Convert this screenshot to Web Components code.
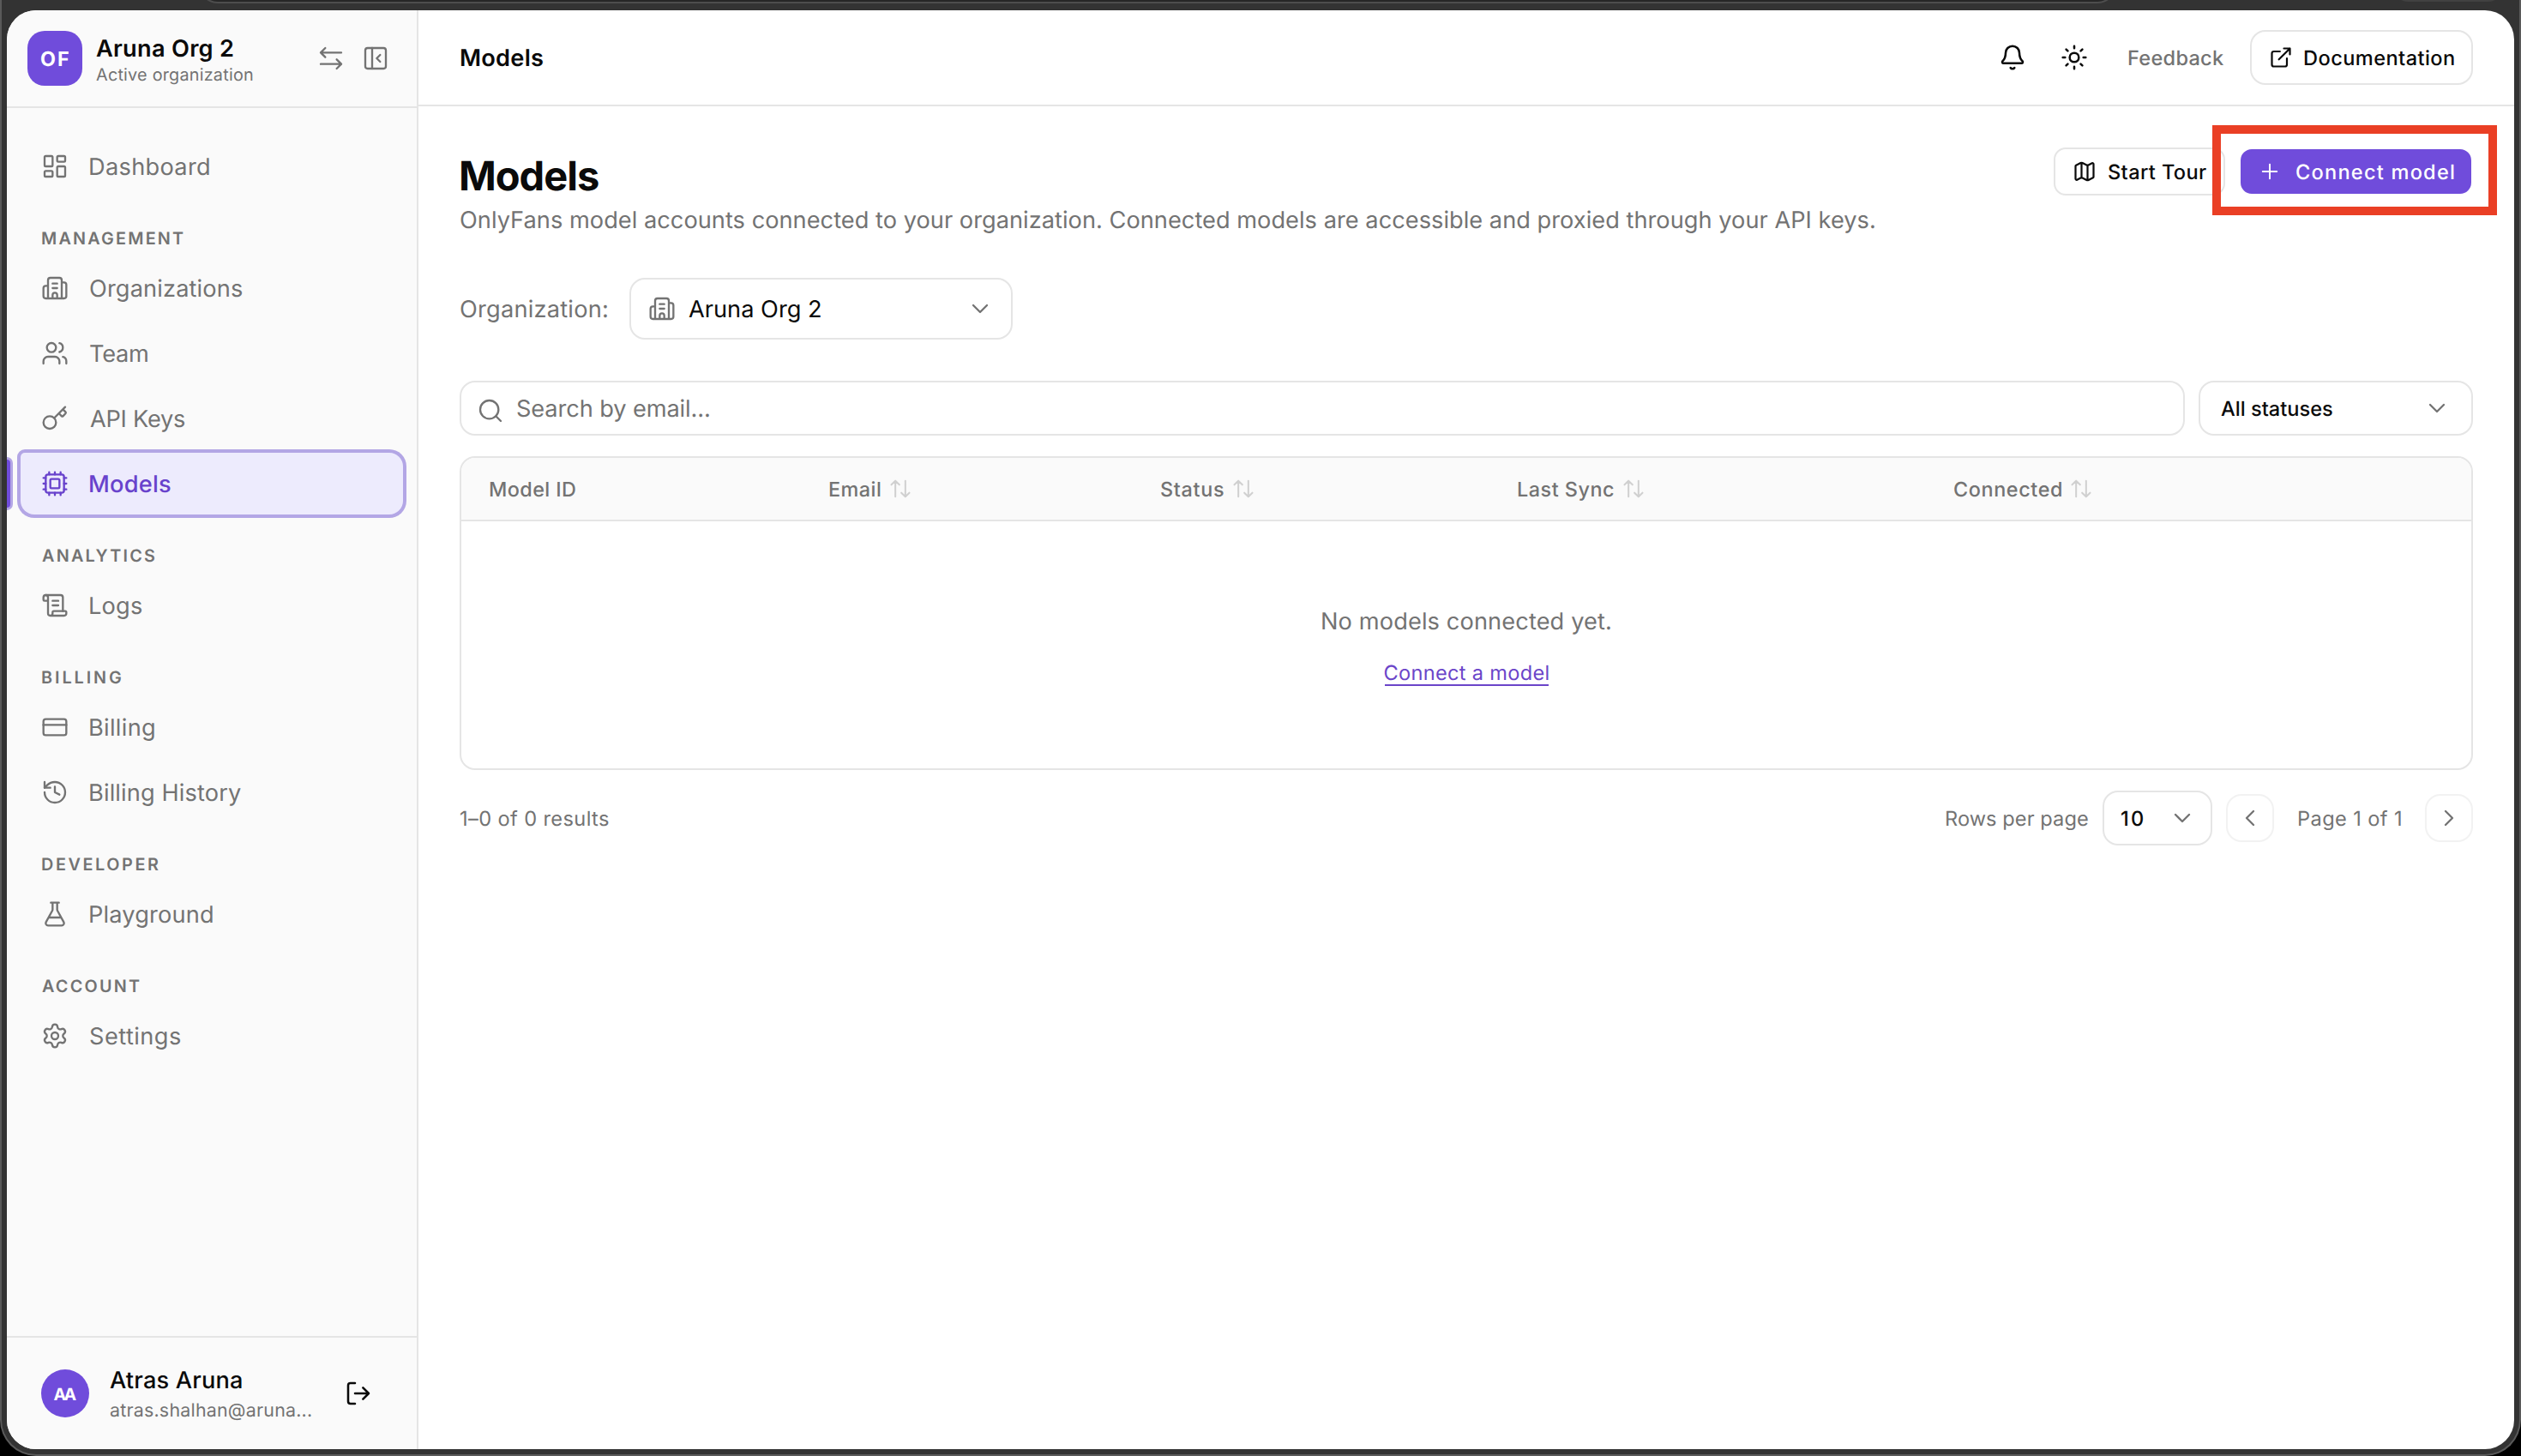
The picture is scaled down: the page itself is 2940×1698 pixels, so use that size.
<!DOCTYPE html>
<html lang="en">
<head>
<meta charset="utf-8">
<title>Models</title>
<style>
  body {
    margin: 0;
    width: 2940px;
    height: 1698px;
    overflow: hidden;
    background: #000;
    color: #0a0a0a;
    font-family: Inter, "Liberation Sans", sans-serif;
    --primary: #704cdb;
    --muted: #737373;
    --line: #e5e5e5;
  }
</style>
</head>
<body>
<app-window>
  <side-bar slot="side">
    <org-header slot="top"></org-header>
    <nav-item icon="dashboard" width="139">Dashboard</nav-item>
    <nav-group label="MANAGEMENT" width="165">
      <nav-item icon="building" width="177">Organizations</nav-item>
      <nav-item icon="users" width="67">Team</nav-item>
      <nav-item icon="key" width="110">API Keys</nav-item>
      <nav-item icon="cpu" width="94" active>Models</nav-item>
    </nav-group>
    <nav-group label="ANALYTICS" width="131">
      <nav-item icon="scroll" width="60">Logs</nav-item>
    </nav-group>
    <nav-group label="BILLING" width="92">
      <nav-item icon="card" width="75">Billing</nav-item>
      <nav-item icon="history" width="176">Billing History</nav-item>
    </nav-group>
    <nav-group label="DEVELOPER" width="136">
      <nav-item icon="flask" width="143">Playground</nav-item>
    </nav-group>
    <nav-group label="ACCOUNT" width="114">
      <nav-item icon="settings" width="105">Settings</nav-item>
    </nav-group>
    <user-card slot="bottom"></user-card>
  </side-bar>
  <top-bar></top-bar>
  <models-page></models-page>
</app-window>

<script>
const icons = {
  dashboard: '<rect width="7" height="9" x="3" y="3" rx="1"/><rect width="7" height="5" x="14" y="3" rx="1"/><rect width="7" height="9" x="14" y="12" rx="1"/><rect width="7" height="5" x="3" y="16" rx="1"/>',
  building: '<path d="M10 12h4M10 8h4M14 21v-3a2 2 0 0 0-4 0v3M6 10H4a2 2 0 0 0-2 2v7a2 2 0 0 0 2 2h16a2 2 0 0 0 2-2V9a2 2 0 0 0-2-2h-2M6 21V5a2 2 0 0 1 2-2h8a2 2 0 0 1 2 2v16"/>',
  users: '<path d="M16 21v-2a4 4 0 0 0-4-4H6a4 4 0 0 0-4 4v2M16 3.128a4 4 0 0 1 0 7.744M22 21v-2a4 4 0 0 0-3-3.87"/><circle cx="9" cy="7" r="4"/>',
  key: '<path d="m15.5 7.5 2.3 2.3a1 1 0 0 0 1.4 0l2.1-2.1a1 1 0 0 0 0-1.4L19 4M21 2l-9.6 9.6"/><circle cx="7.5" cy="15.5" r="5.5"/>',
  cpu: '<path d="M12 20v2M12 2v2M17 20v2M17 2v2M2 12h2M2 17h2M2 7h2M20 12h2M20 17h2M20 7h2M7 20v2M7 2v2"/><rect x="4" y="4" width="16" height="16" rx="2"/><rect x="8" y="8" width="8" height="8" rx="1"/>',
  scroll: '<path d="M15 12h-5M15 8h-5M19 17V5a2 2 0 0 0-2-2H4"/><path d="M8 21h12a2 2 0 0 0 2-2v-1a1 1 0 0 0-1-1H11a1 1 0 0 0-1 1v1a2 2 0 1 1-4 0V5a2 2 0 1 0-4 0v2a1 1 0 0 0 1 1h3"/>',
  card: '<rect width="20" height="14" x="2" y="5" rx="2"/><path d="M2 10h20"/>',
  history: '<path d="M3 12a9 9 0 1 0 9-9 9.75 9.75 0 0 0-6.74 2.74L3 8"/><path d="M3 3v5h5M12 7v5l4 2"/>',
  flask: '<path d="M14 2v6a2 2 0 0 0 .245.96l5.51 10.08A2 2 0 0 1 18 22H6a2 2 0 0 1-1.755-2.96l5.51-10.08A2 2 0 0 0 10 8V2M6.453 15h11.094M8.5 2h7"/>',
  settings: '<path d="M9.671 4.136a2.34 2.34 0 0 1 4.659 0 2.34 2.34 0 0 0 3.319 1.915 2.34 2.34 0 0 1 2.33 4.033 2.34 2.34 0 0 0 0 3.831 2.34 2.34 0 0 1-2.33 4.033 2.34 2.34 0 0 0-3.319 1.915 2.34 2.34 0 0 1-4.659 0 2.34 2.34 0 0 0-3.32-1.915 2.34 2.34 0 0 1-2.33-4.033 2.34 2.34 0 0 0 0-3.831A2.34 2.34 0 0 1 6.35 6.051a2.34 2.34 0 0 0 3.319-1.915"/><circle cx="12" cy="12" r="3"/>',
  swap: '<path d="M21 7H3M7 3 3 7l4 4M3 17h18M17 13l4 4-4 4"/>',
  panel: '<rect width="18" height="18" x="3" y="3" rx="2"/><path d="M9 3v18M16 15l-3-3 3-3"/>',
  logout: '<path d="M9 21H5a2 2 0 0 1-2-2V5a2 2 0 0 1 2-2h4M16 17l5-5-5-5M21 12H9"/>',
  bell: '<path d="M10.268 21a2 2 0 0 0 3.464 0M3.262 15.326A1 1 0 0 0 4 17h16a1 1 0 0 0 .74-1.673C19.41 13.956 18 12.499 18 8A6 6 0 0 0 6 8c0 4.499-1.411 5.956-2.738 7.326"/>',
  sun: '<circle cx="12" cy="12" r="4"/><path d="M12 2v2M12 20v2M4.93 4.93l1.41 1.41M17.66 17.66l1.41 1.41M2 12h2M20 12h2M6.34 17.66l-1.41 1.41M19.07 4.93l-1.41 1.41"/>',
  external: '<path d="M15 3h6v6M10 14 21 3M18 13v6a2 2 0 0 1-2 2H5a2 2 0 0 1-2-2V8a2 2 0 0 1 2-2h6"/>',
  map: '<path d="M14.106 5.553a2 2 0 0 0 1.788 0l3.659-1.83A1 1 0 0 1 21 4.619v12.764a1 1 0 0 1-.553.894l-4.553 2.277a2 2 0 0 1-1.788 0l-4.212-2.106a2 2 0 0 0-1.788 0l-3.659 1.83A1 1 0 0 1 3 19.381V6.618a1 1 0 0 1 .553-.894l4.553-2.277a2 2 0 0 1 1.788 0zM15 5.764v15M9 3.236v15"/>',
  plus: '<path d="M5 12h14M12 5v14"/>',
  search: '<circle cx="11" cy="11" r="8"/><path d="m21 21-4.3-4.3"/>',
  down: '<path d="m6 9 6 6 6-6"/>',
  left: '<path d="m15 18-6-6 6-6"/>',
  right: '<path d="m9 18 6-6-6-6"/>',
  sort: '<path d="m21 16-4 4-4-4M17 20V4M3 8l4-4 4 4M7 4v16"/>'
}

// Registers an element whose shadow root is a clone of the given markup.
function define (name, html) {
  const template = document.createElement('template')
  template.innerHTML = html
  customElements.define(name, class extends HTMLElement {
    constructor () {
      super()
      this.attachShadow({ mode: 'open' }).appendChild(template.content.cloneNode(true))
    }
  })
}

customElements.define('ui-icon', class extends HTMLElement {
  constructor () {
    super()
    this.attachShadow({ mode: 'open' })
  }

  connectedCallback () {
    const size = this.getAttribute('size') || 32
    const stroke = this.getAttribute('stroke') || 1.75
    this.shadowRoot.innerHTML = `
      <style>
        :host { display: block; flex: none; width: ${size}px; height: ${size}px; }
        svg { display: block; fill: none; stroke: currentColor; stroke-linecap: round; stroke-linejoin: round; }
      </style>
      <svg width="${size}" height="${size}" viewBox="0 0 24 24" stroke-width="${stroke}">${icons[this.getAttribute('name')]}</svg>
    `
  }
})

// One line of text, tracked so that its ink is exactly `width` pixels wide.
const pen = document.createElement('canvas').getContext('2d')

customElements.define('ui-text', class extends HTMLElement {
  constructor () {
    super()
    this.attachShadow({ mode: 'open' })
  }

  connectedCallback () {
    const size = this.getAttribute('size') || 27.2
    const weight = this.getAttribute('weight') || 400
    const width = Number(this.getAttribute('width'))
    const text = this.textContent.trim()
    pen.font = `${weight} ${size}px Inter, "Liberation Sans", sans-serif`
    pen.textRendering = 'geometricPrecision'
    const box = pen.measureText(text)
    const ink = box.actualBoundingBoxLeft + box.actualBoundingBoxRight
    const spacing = (width - ink) / (text.length - 1)
    this.shadowRoot.innerHTML = `
      <style>
        :host {
          display: block;
          flex: none;
          width: ${width}px;
          padding-top: 1px;
          margin-bottom: -1px;
          font-size: ${size}px;
          font-weight: ${weight};
          line-height: 32px;
          letter-spacing: ${spacing.toFixed(3)}px;
          text-indent: ${box.actualBoundingBoxLeft.toFixed(2)}px;
          text-rendering: geometricPrecision;
          white-space: nowrap;
        }
      </style>
      <slot></slot>
    `
  }
})

define('app-window', `
  <style>
    :host {
      display: block;
      position: relative;
      box-sizing: border-box;
      width: 2940px;
      height: 1698px;
      padding: 12px 6px 6px;
      border: solid #5a5a5a;
      border-width: 0 2px 2px;
      border-radius: 0 0 42px 42px;
      background: #333;
      overflow: hidden;
    }
    .address, .chip {
      position: absolute;
      top: -40px;
      box-sizing: border-box;
    }
    .address {
      left: 230px;
      width: 2236px;
      height: 44px;
      border: 2px solid #4d4d4d;
      border-radius: 22px;
      background: #262626;
    }
    .chip {
      left: 2790px;
      width: 126px;
      height: 42px;
      border-radius: 16px;
      background: #414141;
    }
    .content {
      display: grid;
      grid-template: 112px 1fr / 480px 1fr;
      height: 1678px;
      border-radius: 34px;
      background: #fff;
      overflow: hidden;
    }
    ::slotted([slot="side"]) { grid-row: 1 / 3; }
  </style>
  <div class="address"></div>
  <div class="chip"></div>
  <div class="content"><slot name="side"></slot><slot></slot></div>
`)

define('side-bar', `
  <style>
    :host {
      display: flex;
      flex-direction: column;
      box-sizing: border-box;
      border-right: 2px solid var(--line);
      background: #fafafa;
      color: var(--muted);
    }
    nav { flex: 1; padding: 32px 16px 0; }
  </style>
  <slot name="top"></slot>
  <nav><slot></slot></nav>
  <slot name="bottom"></slot>
`)

define('org-header', `
  <style>
    :host {
      display: flex;
      align-items: center;
      box-sizing: border-box;
      height: 114px;
      padding: 0 32px 0 24px;
      border-bottom: 2px solid var(--line);
    }
    .logo {
      display: grid;
      place-items: center;
      width: 64px;
      height: 64px;
      margin-right: 16px;
      border-radius: 20px;
      background: var(--primary);
      color: #fff;
    }
    .names { flex: 1; padding-top: 5px; }
    .names ui-text { line-height: 30px; }
    .name { color: #0a0a0a; }
    .tools { display: flex; gap: 20px; }
  </style>
  <div class="logo"><ui-text size="23.3" weight="700" width="32">OF</ui-text></div>
  <div class="names">
    <ui-text class="name" weight="600" width="160">Aruna Org 2</ui-text>
    <ui-text size="19.8" width="183">Active organization</ui-text>
  </div>
  <div class="tools"><ui-icon name="swap"></ui-icon><ui-icon name="panel"></ui-icon></div>
`)

customElements.define('nav-group', class extends HTMLElement {
  constructor () {
    super()
    this.attachShadow({ mode: 'open' })
  }

  connectedCallback () {
    this.shadowRoot.innerHTML = `
      <style>
        :host { display: block; padding-top: 24px; }
        .label { display: flex; align-items: center; height: 46px; padding-left: 25px; }
        .items { display: grid; gap: 4px; }
      </style>
      <div class="label"><ui-text size="19.8" weight="600" width="${this.getAttribute('width')}">${this.getAttribute('label')}</ui-text></div>
      <div class="items"><slot></slot></div>
    `
  }
})

customElements.define('nav-item', class extends HTMLElement {
  constructor () {
    super()
    this.attachShadow({ mode: 'open' })
  }

  connectedCallback () {
    const weight = this.hasAttribute('active') ? 500 : 400
    this.shadowRoot.innerHTML = `
      <style>
        :host {
          display: flex;
          position: relative;
          align-items: center;
          gap: 25px;
          box-sizing: border-box;
          height: 72px;
          padding-left: 24px;
        }
        :host([active]) {
          border-radius: 5px 16px 16px 16px;
          background: #edebfd;
          box-shadow: 0 0 0 4px #b3a6e5;
          color: #6842cc;
        }
        :host([active])::before {
          content: "";
          position: absolute;
          left: -20px;
          top: 8px;
          width: 8px;
          height: 56px;
          border-radius: 4px;
          background: #704cdb;
          box-shadow: 0 0 0 3px #b3a6e5;
        }
      </style>
      <ui-icon name="${this.getAttribute('icon')}"></ui-icon>
      <ui-text weight="${weight}" width="${this.getAttribute('width')}">${this.textContent}</ui-text>
    `
  }
})

define('user-card', `
  <style>
    :host {
      display: flex;
      align-items: center;
      box-sizing: border-box;
      height: 132px;
      padding: 0 52px 0 40px;
      border-top: 2px solid var(--line);
    }
    .avatar {
      display: grid;
      place-items: center;
      width: 56px;
      height: 56px;
      margin-right: 24px;
      border-radius: 50%;
      background: var(--primary);
      color: #fff;
    }
    .names { display: grid; flex: 1; gap: 3px; padding-top: 2px; }
    .name, ui-icon { color: #0a0a0a; }
  </style>
  <div class="avatar"><ui-text size="19.6" weight="700" width="27">AA</ui-text></div>
  <div class="names">
    <ui-text class="name" weight="500" width="154">Atras Aruna</ui-text>
    <ui-text size="21.4" width="235">atras.shalhan@aruna...</ui-text>
  </div>
  <ui-icon name="logout" stroke="1.9"></ui-icon>
`)

define('ui-button', `
  <style>
    :host {
      display: flex;
      align-items: center;
      box-sizing: border-box;
      border: 2px solid var(--line);
      border-radius: 18px;
      background: #fff;
    }
  </style>
  <slot></slot>
`)

define('top-bar', `
  <style>
    :host {
      display: flex;
      align-items: center;
      padding: 0 48px;
      border-bottom: 2px solid var(--line);
    }
    .title { margin: 0 auto -1px 1px; }
    .sun { margin: 0 47px 0 40px; }
    .feedback { color: var(--muted); margin-right: 31px; }
    ui-button { width: 260px; height: 64px; padding-left: 20px; gap: 13px; }
  </style>
  <ui-text class="title" weight="600" width="96">Models</ui-text>
  <ui-icon name="bell" stroke="1.9"></ui-icon>
  <ui-icon class="sun" name="sun" stroke="1.9"></ui-icon>
  <ui-text class="feedback" size="23.6" weight="500" width="111">Feedback</ui-text>
  <ui-button>
    <ui-icon name="external" size="28" stroke="1.9"></ui-icon>
    <ui-text size="23.6" weight="500" width="175">Documentation</ui-text>
  </ui-button>
`)

define('models-page', `
  <style>
    :host { display: block; padding: 48px 48px 0; }
    .row { display: flex; align-items: center; }
    .heading { align-items: flex-start; }
    .heading > div:first-child { flex: 1; }
    .heading .title { margin-left: 2px; line-height: 66px; }
    .sub { margin-left: 1px; line-height: 36px; color: var(--muted); }
    .tour { width: 200px; height: 56px; padding-left: 20px; gap: 14px; border-radius: 14px; }
    .spot { position: relative; margin: 2px 2px 0 18px; }
    .spot ui-button {
      width: 269px;
      height: 52px;
      padding-left: 18px;
      gap: 17px;
      border-color: var(--primary);
      border-radius: 13px;
      background: var(--primary);
      color: #fff;
    }
    .ring {
      position: absolute;
      inset: -28px -30px -25px -33px;
      border: 10px solid #ea3f25;
    }
    .org { margin-top: 50px; padding-left: 1px; gap: 26px; color: var(--muted); }
    .org ui-button { width: 447px; height: 72px; padding: 0 20px; }
    .org ui-button ui-text { margin: 0 auto -1px 15px; color: #0a0a0a; }
    .filters { margin-top: 48px; gap: 16px; }
    .search { flex: 1; height: 64px; padding-left: 18px; gap: 15px; color: var(--muted); }
    .search ui-icon { margin-top: 6px; }
    .status { width: 320px; height: 64px; padding: 0 24px; justify-content: space-between; }
    .status ui-icon, .size ui-icon { color: var(--muted); }
    models-table { margin-top: 24px; }
    .footer { margin-top: 24px; color: var(--muted); }
    .footer .count { margin: 0 auto -1px 1px; }
    .size { width: 128px; height: 64px; margin: 0 16px 0 17px; padding-left: 20px; gap: 30px; color: #0a0a0a; }
    .step { width: 56px; height: 56px; justify-content: center; border-color: #f2f2f2; }
    .page { margin: 0 28px -1px 29px; }
  </style>
  <div class="row heading">
    <div>
      <ui-text class="title" size="47" weight="700" width="160">Models</ui-text>
      <ui-text class="sub" width="1649">OnlyFans model accounts connected to your organization. Connected models are accessible and proxied through your API keys.</ui-text>
    </div>
    <ui-button class="tour">
      <ui-icon name="map" size="28" stroke="1.9"></ui-icon>
      <ui-text size="23.6" weight="500" width="114">Start Tour</ui-text>
    </ui-button>
    <div class="spot">
      <ui-button>
        <ui-icon name="plus" size="28"></ui-icon>
        <ui-text size="23.6" weight="500" width="184">Connect model</ui-text>
      </ui-button>
      <div class="ring"></div>
    </div>
  </div>
  <div class="row org">
    <ui-text width="171">Organization:</ui-text>
    <ui-button>
      <ui-icon name="building"></ui-icon>
      <ui-text width="154">Aruna Org 2</ui-text>
      <ui-icon name="down"></ui-icon>
    </ui-button>
  </div>
  <div class="row filters">
    <ui-button class="search">
      <ui-icon name="search"></ui-icon>
      <ui-text width="224">Search by email...</ui-text>
    </ui-button>
    <ui-button class="status">
      <ui-text size="23.6" weight="500" width="130">All statuses</ui-text>
      <ui-icon name="down"></ui-icon>
    </ui-button>
  </div>
  <models-table></models-table>
  <div class="row footer">
    <ui-text class="count" size="23.6" width="173">1–0 of 0 results</ui-text>
    <ui-text size="23.6" width="165">Rows per page</ui-text>
    <ui-button class="size">
      <ui-text size="23.6" weight="500" width="25">10</ui-text>
      <ui-icon name="down"></ui-icon>
    </ui-button>
    <ui-button class="step"><ui-icon name="left"></ui-icon></ui-button>
    <ui-text class="page" size="23.6" width="119">Page 1 of 1</ui-text>
    <ui-button class="step"><ui-icon name="right"></ui-icon></ui-button>
  </div>
`)

define('sort-head', `
  <style>
    :host { display: flex; align-items: center; gap: 9px; }
    ui-icon { color: #d0d0d0; }
  </style>
  <slot></slot>
  <ui-icon name="sort" size="28"></ui-icon>
`)

define('models-table', `
  <style>
    :host {
      display: block;
      box-sizing: border-box;
      height: 366px;
      border: 2px solid var(--line);
      border-radius: 18px;
      color: var(--muted);
      overflow: hidden;
    }
    .head {
      display: grid;
      grid-template-columns: 396px 387px 416px 509px 1fr;
      align-items: center;
      height: 72px;
      padding-left: 33px;
      border-bottom: 2px solid var(--line);
      background: #fafafa;
    }
    .empty {
      display: grid;
      justify-items: center;
      gap: 29px;
      padding-top: 100px;
    }
    .link { color: #6b45c9; box-shadow: 0 -2px 0 #6b45c9 inset; line-height: 30px; }
  </style>
  <div class="head">
    <ui-text size="23.4" weight="500" width="100">Model ID</ui-text>
    <sort-head><ui-text size="23.4" weight="500" width="60">Email</ui-text></sort-head>
    <sort-head><ui-text size="23.4" weight="500" width="73">Status</ui-text></sort-head>
    <sort-head><ui-text size="23.4" weight="500" width="112">Last Sync</ui-text></sort-head>
    <sort-head><ui-text size="23.4" weight="500" width="125">Connected</ui-text></sort-head>
  </div>
  <div class="empty">
    <ui-text width="336">No models connected yet.</ui-text>
    <ui-text class="link" size="23.6" width="191">Connect a model</ui-text>
  </div>
`)
</script>
</body>
</html>
